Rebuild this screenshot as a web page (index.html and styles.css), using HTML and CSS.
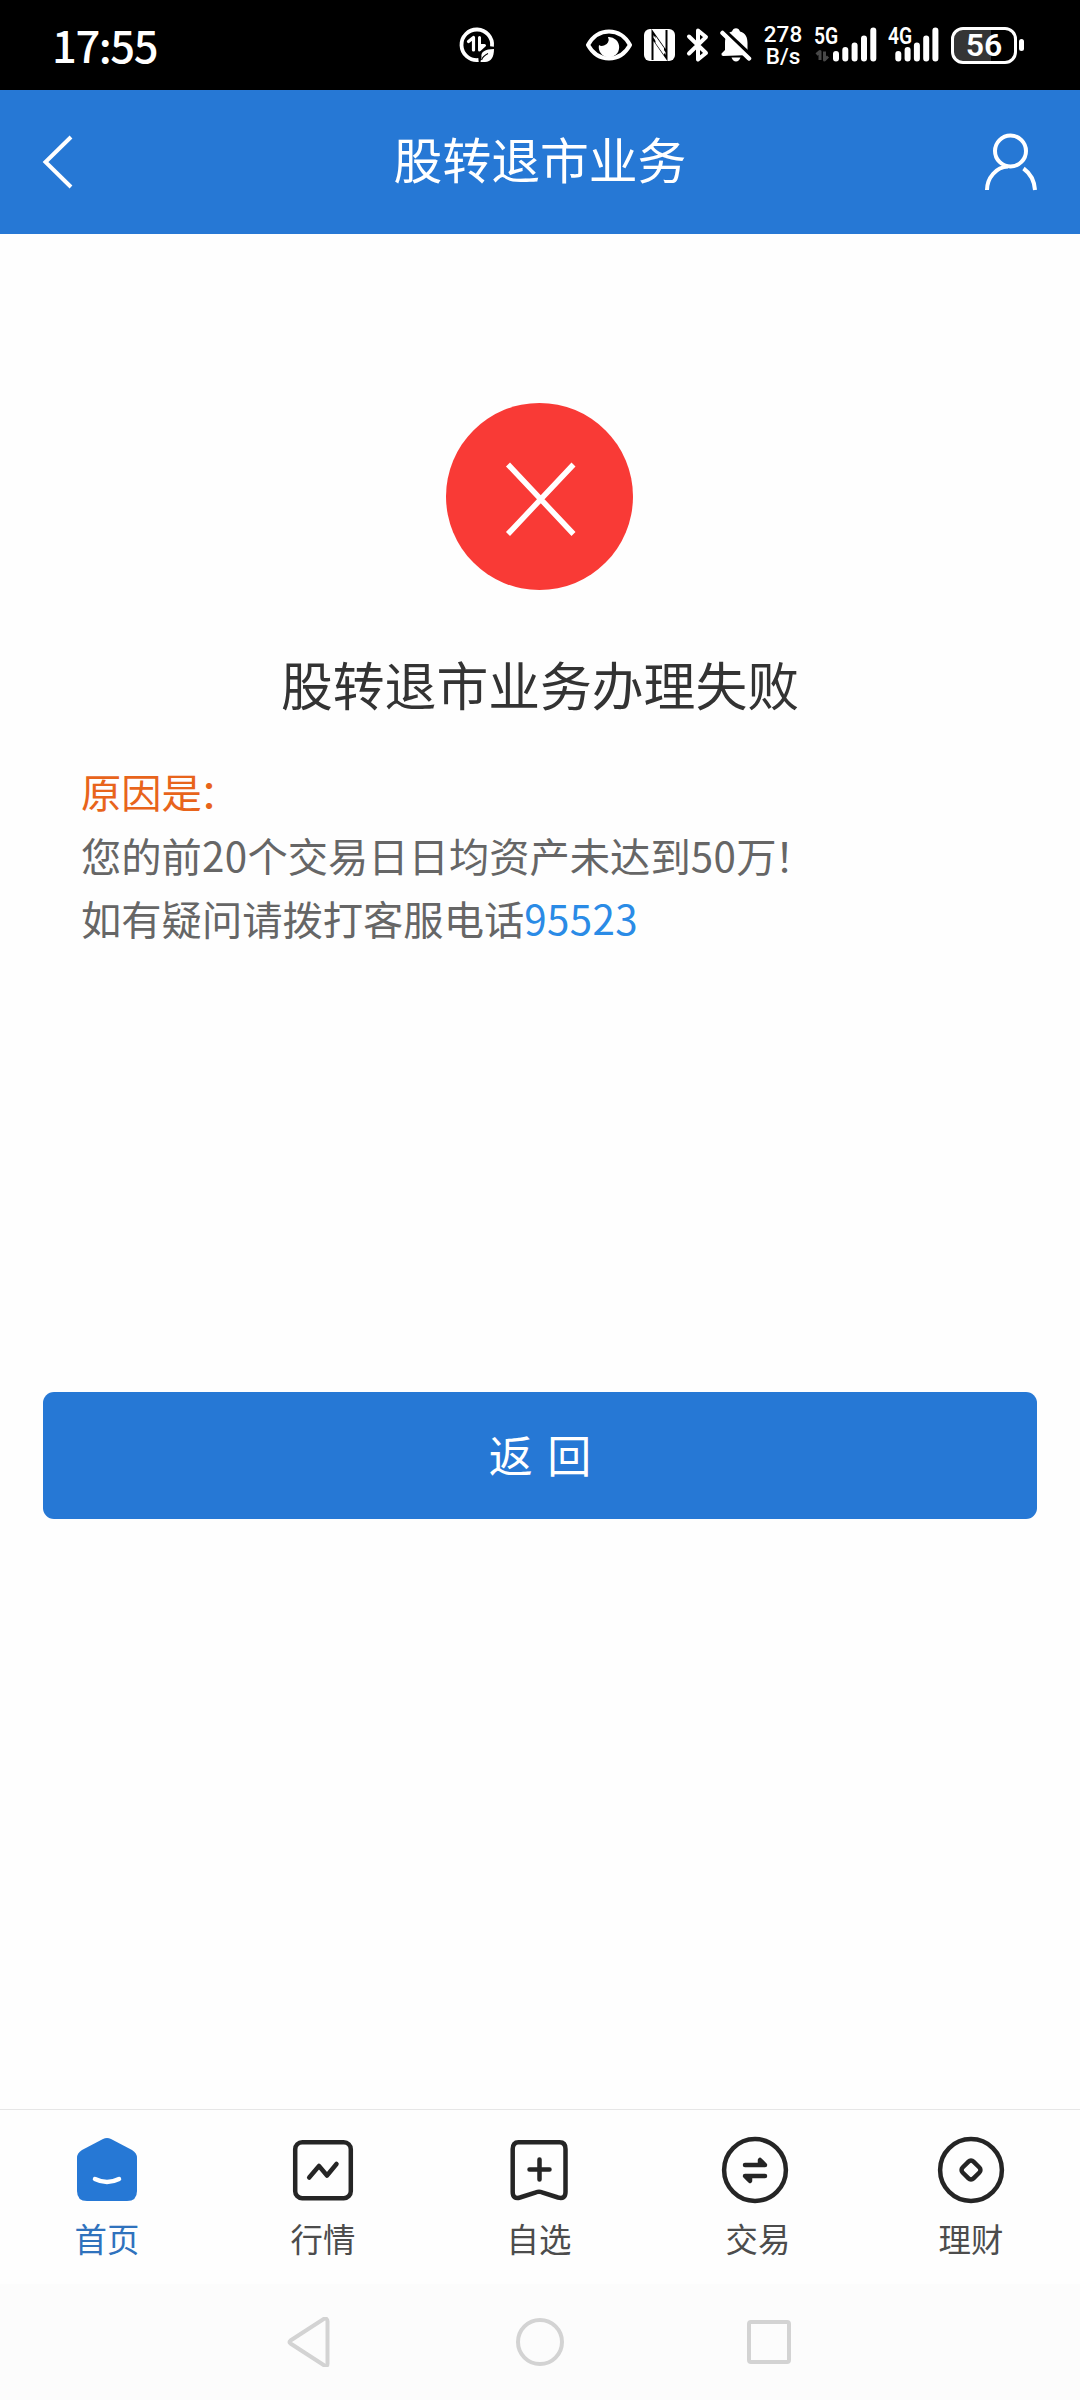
FILE: index.html
```html
<!DOCTYPE html>
<html lang="zh-CN">
<head>
    <meta charset="UTF-8">
    <title>股转退市业务</title>
    <link rel="stylesheet" href="styles.css">
</head>
<body>
    <div class="status-bar">
        <span class="clock">17:55</span>
        <svg class="data-saver" width="36" height="36" viewBox="0 0 36 36">
            <path d="M33 19.500 A15.300 15.300 0 1 0 19.500 33" fill="none" stroke="#fff" stroke-width="3.800"/>
            <path d="M9.500 14.500 L14.500 10.500 V23" fill="none" stroke="#fff" stroke-width="3.200" stroke-linejoin="round" stroke-linecap="round"/>
            <path d="M20.500 10.500 V23 L25.500 18.500 H22" fill="none" stroke="#fff" stroke-width="3" stroke-linejoin="round" stroke-linecap="round"/>
            <path d="M35 22 C26 22 21.500 25 22.500 30 L21.500 35 H26 C32 35 35 30 35 22 Z" fill="#fff"/>
            <path d="M22.500 33 Q24 29 29 26.500" fill="none" stroke="#000" stroke-width="1.200"/>
        </svg>
        <div class="status-icons">
            <svg width="46" height="34" viewBox="0 0 46 34">
                <path d="M2 17 C7 8 14 3.500 23 3.500 S39 8 44 17 C39 26 32 30.500 23 30.500 S7 26 2 17 Z" fill="none" stroke="#fff" stroke-width="4" stroke-linejoin="round"/>
                <path d="M13 17 A10.200 10.200 0 1 0 22 9 A6 6 0 0 1 18 17.500 Q15 18.500 13 17 Z" fill="#fff"/>
            </svg>
            <svg class="nfc" width="31" height="32" viewBox="0 0 31 32">
                <rect width="31" height="32" rx="6" fill="#fff"/>
                <path d="M8.500 31 V3 L22.500 23 V28 M22.500 1 V29 L8.500 9" fill="none" stroke="#000" stroke-width="2"/>
                <path d="M11.500 14 L20 26 V19 L11.500 7 Z" fill="#fff"/>
            </svg>
            <svg class="bluetooth" width="24" height="36" viewBox="0 0 24 36">
                <path d="M3 9.500 L20 26 L12 32.500 V3.500 L20 10 L3 26.500" fill="none" stroke="#fff" stroke-width="4" stroke-linejoin="round" stroke-linecap="round"/>
            </svg>
            <svg class="bell" width="32" height="36" viewBox="0 0 32 36">
                <path d="M3 29 Q1 28.500 1.500 26.500 L5 23 V16 C5 9 8 5.500 12 4.500 C13 0 19 0 20 4.500 C26 6 27.500 11 27.500 16 V23 L30 28 Z" fill="#fff"/>
                <path d="M11.500 30.500 H20.500 Q19 34.500 16 34.500 T11.500 30.500 Z" fill="#fff"/>
                <path d="M1.500 1 L32.500 30" stroke="#000" stroke-width="4"/>
                <path d="M2.500 6 L29 31.500" stroke="#fff" stroke-width="4.500" stroke-linecap="round"/>
            </svg>
            <div class="net-speed"><span>278</span><span>B/s</span></div>
            <div class="signal">
                <span class="network">5G</span>
                <svg width="64" height="36" viewBox="0 0 64 36">
                    <path d="M2.500 27.500 L6 24.500 V33 M10.500 24.500 V33 L14 29.500" fill="none" stroke="#484848" stroke-width="3" stroke-linejoin="round"/>
                    <path d="M22 27 V31.500 M31.300 23 V31.500 M40.600 18.500 V31.500 M50 11.500 V31.500 M59.300 3.500 V31.500" stroke="#fff" stroke-width="6" stroke-linecap="round"/>
                </svg>
            </div>
            <div class="signal signal-4g">
                <span class="network">4G</span>
                <svg width="52" height="36" viewBox="0 0 52 36">
                    <path d="M10.300 27 V31.500 M19.600 23 V31.500 M28.900 18.500 V31.500 M38.200 11.500 V31.500 M47.400 3.500 V31.500" stroke="#fff" stroke-width="6" stroke-linecap="round"/>
                </svg>
            </div>
            <div class="battery">56</div>
            <span class="battery-tip"></span>
        </div>
    </div>

    <div class="header">
        <svg width="34" height="56" viewBox="0 0 34 56">
            <path d="M31 3 L5.500 28 L31 53" fill="none" stroke="#fff" stroke-width="4"/>
        </svg>
        <h1>股转退市业务</h1>
        <svg width="54" height="58" viewBox="0 0 54 58">
            <circle cx="26.500" cy="18" r="15.500" fill="none" stroke="#fff" stroke-width="4"/>
            <path d="M3 57 C3 45 12 34 24 33.500 M39.500 35.500 Q50 43 51 57" fill="none" stroke="#fff" stroke-width="4"/>
        </svg>
    </div>

    <div class="result">
        <svg class="fail-icon" width="188" height="188" viewBox="0 0 188 188">
            <circle cx="93.500" cy="93.500" r="93.500" fill="#f93a36"/>
            <path d="M62 61.500 L127.500 131 M127.500 61.500 L62 131" stroke="#fff" stroke-width="5.500"/>
        </svg>
        <h2>股转退市业务办理失败</h2>
        <div class="reason">
            <p class="reason-title">原因是<span class="colon">：</span></p>
            <p>您的前<span class="num">20</span>个交易日日均资产未达到<span class="num">50</span>万<span class="mark">！</span></p>
            <p>如有疑问请拨打客服电话<a class="num" href="tel:95523">95523</a></p>
        </div>
        <button class="back-btn"><span>返 回</span></button>
    </div>

    <div class="tab-bar">
        <div class="tab active">
            <svg width="68" height="68" viewBox="0 0 68 68">
                <path d="M30 3 Q34 1 38 3 L59 14 Q64 17 64 22 V55 Q64 65 54 65 H14 Q4 65 4 55 V22 Q4 17 9 14 Z" fill="#2678d5"/>
                <path d="M22 43 Q34 49 46 43" fill="none" stroke="#fff" stroke-width="4.500" stroke-linecap="round"/>
            </svg>
            <span>首页</span>
        </div>
        <div class="tab">
            <svg width="68" height="68" viewBox="0 0 68 68">
                <rect x="6.200" y="6.200" width="55.600" height="56" rx="7" class="line"/>
                <path d="M20.200 41.500 L30 30 L38 39.500 L47.500 28" class="line round"/>
            </svg>
            <span>行情</span>
        </div>
        <div class="tab">
            <svg width="68" height="68" viewBox="0 0 68 68">
                <path d="M13.500 6.200 H54.500 Q60.500 6.200 60.500 13 V56 Q60.500 63.500 53 61.500 L37 56.300 Q34 55 31 56.300 L15 61.500 Q7.700 63.500 7.700 56 V13 Q7.700 6.200 13.500 6.200 Z" class="line"/>
                <path d="M24.500 33.500 H44.500 M34.500 23.500 V43.500" class="line round"/>
            </svg>
            <span>自选</span>
        </div>
        <div class="tab trade">
            <svg width="68" height="68" viewBox="0 0 68 68">
                <circle cx="34" cy="34" r="30.900" class="line"/>
                <path d="M24 29 H44 L39 24 V29 M44 40 H24 L29 45 V40" class="line round"/>
            </svg>
            <span>交易</span>
        </div>
        <div class="tab">
            <svg width="68" height="68" viewBox="0 0 68 68">
                <circle cx="34" cy="34" r="30.900" class="line"/>
                <rect x="26.300" y="26.300" width="15.400" height="15.400" rx="3.500" transform="rotate(45 34 34)" class="line"/>
            </svg>
            <span>理财</span>
        </div>
    </div>

    <div class="nav-bar">
        <svg width="50" height="50" viewBox="0 0 50 50">
            <path d="M5.500 23.500 L39 1.800 Q42.500 1 42.500 4.500 V46.500 Q42.500 50 39 48.200 L5.500 26.500 Q3.500 25 5.500 23.500 Z"/>
        </svg>
        <svg width="50" height="50" viewBox="0 0 50 50"><circle cx="25" cy="25" r="22"/></svg>
        <svg width="50" height="50" viewBox="0 0 50 50"><rect x="5" y="5" width="40" height="40" rx="2"/></svg>
    </div>
</body>
</html>
```
FILE: styles.css
```css
* {
    box-sizing: border-box;
}
body {
    margin: 0;
    width: 1080px;
    height: 2400px;
    display: flex;
    flex-direction: column;
    background: #fefefe;
    font-family: "Noto Sans CJK SC", sans-serif;
    overflow: hidden;
}
h1, h2, p {
    margin: 0;
    font-weight: 400;
}
svg {
    display: block;
    flex-shrink: 0;
}

/* barra de estado */
.status-bar {
    height: 90px;
    display: flex;
    align-items: center;
    background: #000;
    color: #fff;
}
.clock {
    width: 407px;
    padding-left: 52px;
    font-size: 43.5px;
    font-weight: 500;
    line-height: 60px;
    letter-spacing: -1.4px;
}
.data-saver {
    margin-left: 52px;
}
.status-icons {
    flex: 1;
    margin-left: 91px;
    display: flex;
    align-items: center;
}
.nfc {
    margin-left: 12px;
}
.bluetooth {
    margin-left: 11px;
}
.bell {
    margin-left: 10px;
}
.net-speed {
    width: 40px;
    margin-left: 11px;
    display: flex;
    flex-direction: column;
    font-family: Roboto, sans-serif;
    font-size: 22.5px;
    font-weight: 500;
    line-height: 22px;
    text-align: center;
}
.signal {
    position: relative;
    margin-left: 11px;
}
.signal-4g {
    margin-left: 10px;
}
.network {
    position: absolute;
    left: 0;
    top: -5px;
    font-family: Roboto, sans-serif;
    font-size: 23px;
    font-weight: 600;
    line-height: 30px;
    transform: scaleX(0.84);
    transform-origin: left;
}
.battery {
    width: 66px;
    height: 37px;
    margin-left: 11px;
    border: 3px solid #fff;
    border-radius: 12px;
    background: linear-gradient(90deg, #353535 37px, #000 37px);
    font-family: Roboto, sans-serif;
    font-size: 32px;
    font-weight: 600;
    line-height: 31px;
    text-align: center;
}
.battery-tip {
    width: 5px;
    height: 12px;
    margin-left: 2px;
    border-radius: 3px;
    background: #fff;
}

.header {
    height: 144px;
    padding: 0 42px 0 40px;
    display: flex;
    align-items: center;
    justify-content: space-between;
    background: #2678d5;
    color: #fff;
}
.header h1 {
    margin: 0 0 8px 22px;
    font-size: 48.8px;
    line-height: 72px;
}

.result {
    flex: 1;
    display: flex;
    flex-direction: column;
    align-items: center;
}
.fail-icon {
    margin-top: 169px;
}
.result h2 {
    margin-top: 55px;
    font-size: 51.8px;
    line-height: 76px;
    color: #333;
}
.reason {
    width: 100%;
    margin-top: 37px;
    padding: 0 81px;
    font-size: 40.3px;
    line-height: 63.5px;
    color: #666;
}
.reason-title {
    color: #e8641b;
}
.colon {
    margin-left: -3px;
}
.mark {
    margin-left: -2px;
}
.num {
    letter-spacing: 0.4px;
}
.reason a {
    color: #2a8be6;
    text-decoration: none;
}
.back-btn {
    width: 994px;
    height: 127px;
    margin-top: 442px;
    padding: 0 0 3px;
    border: none;
    border-radius: 11px;
    background: #2678d5;
    color: #fff;
    font-family: inherit;
    font-size: 44px;
    word-spacing: 4.5px;
}

/* pestañas */
.tab-bar {
    width: 1081px;
    height: 175px;
    margin-left: -1px;
    padding-right: 1px;
    display: flex;
    border-top: 1px solid #e6e6e6;
}
.tab {
    flex: 1;
    padding-top: 26px;
    display: flex;
    flex-direction: column;
    align-items: center;
    color: #4c4c4c;
    font-size: 32.4px;
    line-height: 44px;
}
.tab span {
    margin-top: 12px;
}
.trade span {
    margin-left: 6px;
}
.active {
    color: #2f72bd;
}
.line {
    fill: none;
    stroke: #252525;
    stroke-width: 4.5;
}
.round {
    stroke-linecap: round;
    stroke-linejoin: round;
}

.nav-bar {
    height: 116px;
    padding: 0 286px 0 285px;
    display: flex;
    align-items: center;
    justify-content: space-between;
    background: #fcfcfc;
}
.nav-bar svg {
    fill: none;
    stroke: #d3d3d3;
    stroke-width: 4;
}
```
